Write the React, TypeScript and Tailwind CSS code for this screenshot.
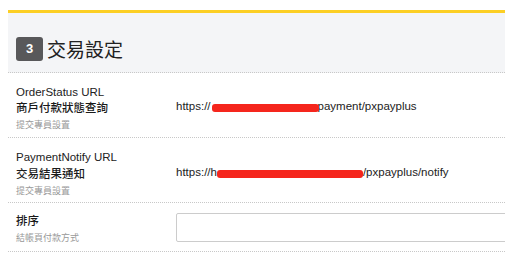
import React from "react";

const font = { fontFamily: '"Liberation Sans", "Noto Sans CJK TC", sans-serif' };

function Redact({ w, ml = 0, mr = 0 }: { w: number; ml?: number; mr?: number }) {
  return (
    <span
      className="inline-block h-[8px] bg-[#f5261d] rounded-[3px] blur-[0.4px] translate-y-[1px]"
      style={{ width: w, marginLeft: ml, marginRight: mr }}
    />
  );
}

export default function App() {
  return (
    <div className="w-[505px] h-[268px] bg-white pt-[10px] pl-[8px] overflow-hidden" style={font}>
      <div className="border-t-[3px] border-[#fccf24]">
        <div className="h-[60px] bg-[#f4f5f7] flex items-end pl-[8px] pb-[11px] border-b border-dotted border-[#c8c8c8]">
          <div className="flex items-center gap-[4px]">
            <div className="w-[27px] h-[24px] rounded-[3px] bg-[#58585a] text-white text-[13px] font-bold flex items-center justify-center">
              3
            </div>
            <div className="text-[19px] text-[#222] leading-none pt-[2px]">交易設定</div>
          </div>
        </div>

        <div className="flex h-[65px] border-b border-dotted border-[#c8c8c8]">
          <div className="w-[168px] shrink-0 pl-[8px] pt-[11px] flex flex-col">
            <div className="text-[11.5px] leading-[16px] text-[#222]">OrderStatus URL</div>
            <div className="text-[11.5px] leading-[17px] font-medium text-[#1a1a1a]">商戶付款狀態查詢</div>
            <div className="text-[9px] leading-[17px] text-[#999]">提交專員設置</div>
          </div>
          <div className="flex items-center pt-[4px] text-[11.5px] text-[#222]">
            <span>https://</span>
            <Redact w={107} ml={1} mr={-1} />
            <span>payment/pxpayplus</span>
          </div>
        </div>

        <div className="flex h-[65px] border-b border-dotted border-[#c8c8c8]">
          <div className="w-[168px] shrink-0 pl-[8px] pt-[11px] flex flex-col">
            <div className="text-[11.5px] leading-[16px] text-[#222]">PaymentNotify URL</div>
            <div className="text-[11.5px] leading-[18px] font-medium text-[#1a1a1a]">交易結果通知</div>
            <div className="text-[9px] leading-[17px] text-[#999]">提交專員設置</div>
          </div>
          <div className="flex items-center pt-[6px] text-[11.5px] text-[#222]">
            <span>https://h</span>
            <Redact w={146} />
            <span>/pxpayplus/notify</span>
          </div>
        </div>

        <div className="flex h-[49px] border-b border-dotted border-[#c8c8c8]">
          <div className="w-[168px] shrink-0 pl-[8px] pt-[10px] flex flex-col">
            <div className="text-[11.5px] leading-[16px] font-medium text-[#1a1a1a]">排序</div>
            <div className="text-[9px] leading-[18px] text-[#999]">結帳頁付款方式</div>
          </div>
          <div className="flex items-center flex-1 min-w-0">
            <div className="w-[340px] shrink-0 h-[29px] border border-[#ccc] rounded-[2px] bg-white" />
          </div>
        </div>
      </div>
    </div>
  );
}
